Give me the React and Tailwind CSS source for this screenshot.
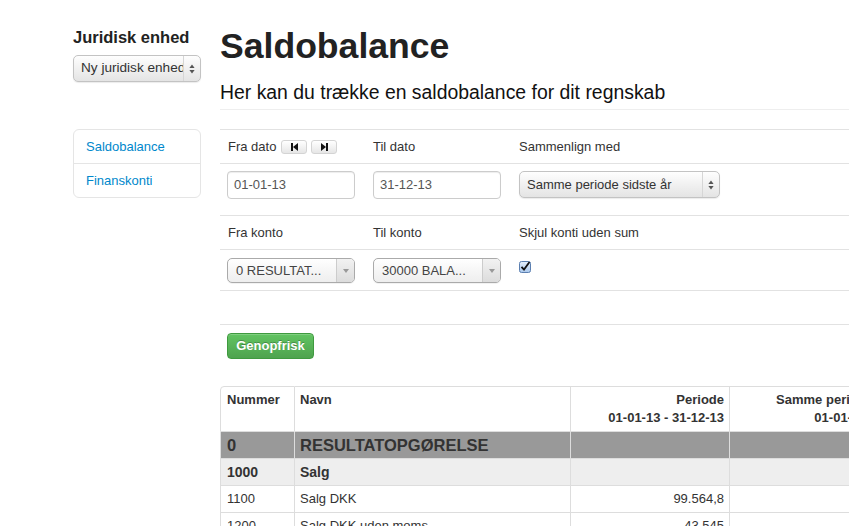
import React from 'react';

// Native (mac style) select look
const NativeSelect = ({ value, className = '', textSize = 'text-[13px]' }) => (
  <div
    className={`flex items-stretch h-[27px] rounded-[5px] border border-[#c3c3c3] bg-gradient-to-b from-[#fefefe] to-[#e4e4e4] shadow-[0_1px_1px_rgba(0,0,0,0.08)] overflow-hidden ${className}`}
  >
    <div className={`flex-1 min-w-0 pl-[7px] flex items-center ${textSize} text-[#333] whitespace-nowrap overflow-hidden`}>
      {value}
    </div>
    <div className="w-[17px] shrink-0 border-l border-[#d6d6d6] flex items-center justify-center">
      <svg width="6" height="10" viewBox="0 0 6 10">
        <path d="M3 0.5 L5.6 4 L0.4 4 Z" fill="#555" />
        <path d="M3 9.5 L5.6 6 L0.4 6 Z" fill="#555" />
      </svg>
    </div>
  </div>
);

// Chosen style select
const ChosenSelect = ({ value }) => (
  <div className="flex items-stretch w-[128px] h-[25px] rounded-[5px] border border-[#aaa] bg-gradient-to-b from-white via-[#f6f6f6] to-[#eee] shadow-[0_1px_0_rgba(0,0,0,0.05)] overflow-hidden">
    <div className="flex-1 min-w-0 pl-[8px] flex items-center text-[13px] text-[#444] whitespace-nowrap overflow-hidden">
      {value}
    </div>
    <div className="w-[18px] shrink-0 border-l border-[#ccc] bg-gradient-to-b from-[#f2f2f2] to-[#dcdcdc] flex items-center justify-center">
      <svg width="6" height="4" viewBox="0 0 6 4">
        <path d="M0 0 L6 0 L3 4 Z" fill="#999" />
      </svg>
    </div>
  </div>
);

const TextInput = ({ value }) => (
  <div className="w-[128px] h-[28px] rounded-[4px] border border-[#ccc] bg-white shadow-[inset_0_1px_1px_rgba(0,0,0,0.075)] pl-[6px] flex items-center text-[13px] text-[#555]">
    {value}
  </div>
);

const MiniButton = ({ dir }) => (
  <div className="w-[26px] h-[14px] rounded-[3px] border border-[#d4d4d4] bg-gradient-to-b from-white to-[#e6e6e6] flex items-center justify-center">
    <svg width="9" height="8" viewBox="0 0 9 8">
      {dir === 'back' ? (
        <>
          <rect x="1" y="0" width="2" height="8" fill="#111" />
          <path d="M8 0 L3 4 L8 8 Z" fill="#111" />
        </>
      ) : (
        <>
          <rect x="6" y="0" width="2" height="8" fill="#111" />
          <path d="M1 0 L6 4 L1 8 Z" fill="#111" />
        </>
      )}
    </svg>
  </div>
);

const Checkbox = () => (
  <svg width="12" height="12" viewBox="0 0 12 12">
    <defs>
      <linearGradient id="cb" x1="0" y1="0" x2="0" y2="1">
        <stop offset="0" stopColor="#e6f0fb" />
        <stop offset="1" stopColor="#a9c7ec" />
      </linearGradient>
    </defs>
    <rect x="0.5" y="0.5" width="11" height="11" rx="2" fill="url(#cb)" stroke="#5b7fb0" />
    <path d="M2.5 5.8 L5 8.6 L10.5 1" fill="none" stroke="#111" strokeWidth="1.8" />
  </svg>
);

const rows = [
  { nr: '0', name: 'RESULTATOPGØRELSE', kind: 'h1' },
  { nr: '1000', name: 'Salg', kind: 'h2' },
  { nr: '1100', name: 'Salg DKK', periode: '99.564,8' },
  { nr: '1200', name: 'Salg DKK uden moms', periode: '43.545' },
  { nr: '1300', name: 'Salg EU', periode: '12.300' },
];

const App = () => {
  return (
    <div className="w-[849px] h-[526px] overflow-hidden bg-white font-['Liberation_Sans',Arial,sans-serif] text-[#333]">
      <div className="flex w-[1200px] pl-[73px] gap-[19px]">
        {/* Sidebar */}
        <aside className="w-[128px] shrink-0 pt-[27px]">
          <h3 className="text-[16.5px] leading-[20px] font-bold text-[#222]">Juridisk enhed</h3>
          <NativeSelect value="Ny juridisk enhed" textSize="text-[13.6px]" className="mt-[8px] h-[26px] w-[128px]" />
          <ul className="mt-[47px] rounded-[6px] border border-[#e5e5e5] bg-white text-[13px] text-[#0088cc]">
            <li className="h-[34px] px-[12px] flex items-center border-b border-[#e5e5e5]">Saldobalance</li>
            <li className="h-[33px] px-[12px] flex items-center">Finanskonti</li>
          </ul>
        </aside>

        {/* Main */}
        <main className="w-[940px] shrink-0 pt-[26px]">
          <h1 className="text-[35.6px] leading-[40px] font-bold text-[#222]">Saldobalance</h1>
          <div className="mt-[14px] pb-[5px] border-b border-[#eee]">
            <p className="text-[19.4px] leading-[24px] text-[#111]">
              Her kan du trække en saldobalance for dit regnskab
            </p>
          </div>

          {/* Filter form */}
          <div className="mt-[19px] border-t border-[#e2e2e2] text-[13px]">
            <div className="flex h-[34px] border-b border-[#e2e2e2]">
              <div className="w-[146px] pl-[8px] flex items-center">
                <span className="mr-[5px]">Fra dato</span>
                <MiniButton dir="back" />
                <span className="w-[4px]" />
                <MiniButton dir="fwd" />
              </div>
              <div className="w-[145px] pl-[7px] flex items-center">Til dato</div>
              <div className="flex-1 pl-[8px] flex items-center">Sammenlign med</div>
            </div>
            <div className="flex h-[52px] border-b border-[#e2e2e2] pt-[7px]">
              <div className="w-[146px] pl-[7px]">
                <TextInput value="01-01-13" />
              </div>
              <div className="w-[145px] pl-[7px]">
                <TextInput value="31-12-13" />
              </div>
              <div className="flex-1 pl-[8px]">
                <NativeSelect value="Samme periode sidste år" className="w-[201px]" />
              </div>
            </div>
            <div className="flex h-[34px] border-b border-[#e2e2e2]">
              <div className="w-[146px] pl-[8px] flex items-center">Fra konto</div>
              <div className="w-[145px] pl-[7px] flex items-center">Til konto</div>
              <div className="flex-1 pl-[8px] flex items-center">Skjul konti uden sum</div>
            </div>
            <div className="flex h-[41px] border-b border-[#e2e2e2] pt-[8px]">
              <div className="w-[146px] pl-[7px]">
                <ChosenSelect value="0 RESULTAT..." />
              </div>
              <div className="w-[145px] pl-[7px]">
                <ChosenSelect value="30000 BALA..." />
              </div>
              <div className="flex-1 pl-[8px] pt-[3px]">
                <Checkbox />
              </div>
            </div>
            <div className="h-[34px] border-b border-[#e2e2e2]" />
          </div>

          <button className="mt-[8px] ml-[7px] w-[87px] h-[26px] rounded-[4px] border border-[#3f9a3f] bg-gradient-to-b from-[#62c462] to-[#4ea34e] text-white text-[13px] font-bold [text-shadow:0_-1px_0_rgba(0,0,0,0.25)] shadow-[inset_0_1px_0_rgba(255,255,255,0.2)]">
            Genopfrisk
          </button>

          {/* Result table */}
          <table className="mt-[27px] border-separate border-spacing-0 text-[13px] leading-[18px] table-fixed w-[716px]">
            <colgroup>
              <col className="w-[75px]" />
              <col className="w-[276px]" />
              <col className="w-[159px]" />
              <col className="w-[206px]" />
            </colgroup>
            <thead>
              <tr className="align-top font-bold">
                <th className="text-left px-[6px] py-[4px] border border-[#ddd] rounded-tl-[4px]">Nummer</th>
                <th className="text-left px-[5px] py-[4px] border-y border-r border-[#ddd]">Navn</th>
                <th className="text-right px-[5px] py-[4px] border-y border-r border-[#ddd]">
                  Periode<br />01-01-13 - 31-12-13
                </th>
                <th className="text-right px-[5px] py-[4px] border-y border-r border-[#ddd] whitespace-nowrap">
                  Samme periode sidste år<br />01-01-12 - 31-12-12
                </th>
              </tr>
            </thead>
            <tbody>
              {rows.map((r) => {
                const rowCls =
                  r.kind === 'h1'
                    ? 'bg-[#999] font-bold text-[16.5px]'
                    : r.kind === 'h2'
                    ? 'bg-[#eee] font-bold text-[14px]'
                    : 'bg-white';
                return (
                  <tr key={r.nr} className={rowCls}>
                    <td className="h-[27px] py-0 px-[6px] border-l border-r border-b border-[#ddd]">{r.nr}</td>
                    <td className="py-0 px-[5px] border-r border-b border-[#ddd]">{r.name}</td>
                    <td className="py-0 px-[5px] text-right border-r border-b border-[#ddd]">{r.periode}</td>
                    <td className="py-0 px-[5px] text-right border-r border-b border-[#ddd]"></td>
                  </tr>
                );
              })}
            </tbody>
          </table>
        </main>
      </div>
    </div>
  );
};

export default App;
